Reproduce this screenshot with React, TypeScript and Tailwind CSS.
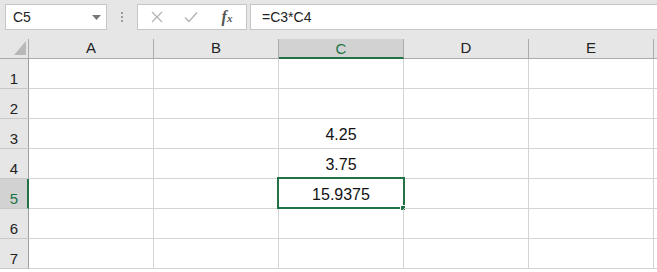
import React from 'react';

const cols = ['A', 'B', 'C', 'D', 'E'];
const rows = [1, 2, 3, 4, 5, 6, 7];

const values: Record<string, string> = {
  C3: '4.25',
  C4: '3.75',
  C5: '15.9375',
};

const App: React.FC = () => {
  const active = { col: 'C', row: 5 };

  return (
    <div className="w-[657px] h-[272px] overflow-hidden bg-white font-['Liberation_Sans',Arial,sans-serif] text-black select-none">
      {/* formula bar */}
      <div className="h-[39px] bg-[#e6e6e6] flex items-start pt-[4px]">
        <div className="ml-[5px] w-[102px] h-[26px] bg-white border border-[#c6c6c6] flex items-center justify-between pl-[7px] pr-[5px]">
          <span className="text-[14px] text-[#222]">C5</span>
          <svg width="9" height="5" viewBox="0 0 9 5">
            <path d="M0 0 L9 0 L4.5 5 Z" fill="#777" />
          </svg>
        </div>
        <div className="w-[30px] h-[26px] flex flex-col items-center justify-center gap-[2px]">
          <span className="w-[2px] h-[2px] bg-[#9a9a9a]" />
          <span className="w-[2px] h-[2px] bg-[#9a9a9a]" />
          <span className="w-[2px] h-[2px] bg-[#9a9a9a]" />
        </div>
        <div className="w-[110px] h-[26px] bg-white border border-[#c6c6c6] flex items-center">
          <div className="w-[38px] flex justify-center">
            <svg width="12" height="12" viewBox="0 0 12 12">
              <path d="M1 1 L11 11 M11 1 L1 11" stroke="#b4b4b4" strokeWidth="1.3" />
            </svg>
          </div>
          <div className="w-[30px] flex justify-center">
            <svg width="14" height="12" viewBox="0 0 14 12">
              <path d="M1 6.5 L5 10.5 L13 1.5" stroke="#b4b4b4" strokeWidth="1.4" fill="none" />
            </svg>
          </div>
          <div className="flex-1 flex justify-center pl-[2px]">
            <span className="font-['Liberation_Serif',serif] italic font-bold text-[16px] text-[#555] leading-none">
              f<span className="text-[11px]">x</span>
            </span>
          </div>
        </div>
        <div className="ml-[3px] flex-1 h-[26px] bg-white border border-[#c6c6c6] border-r-0 flex items-center pl-[11px]">
          <span className="text-[14px] text-[#222]">=C3*C4</span>
        </div>
      </div>

      {/* column headers */}
      <div className="flex h-[20px] bg-[#e6e6e6]">
        <div className="w-[29px] h-full border-r border-b border-[#ababab] relative">
          <svg className="absolute left-[14px] top-[2px]" width="12" height="14" viewBox="0 0 12 14">
            <path d="M12 0 L12 14 L0 14 Z" fill="#b8b8b8" />
          </svg>
        </div>
        {cols.map((c) => {
          const sel = c === active.col;
          return (
            <div
              key={c}
              className={`w-[125px] shrink-0 h-full border-r border-[#ababab] flex items-center justify-center text-[15px] ${
                sel ? 'bg-[#d2d2d2] border-b-2 border-b-[#217346] text-[#217346]' : 'border-b border-b-[#ababab] text-[#222]'
              }`}
            >
              <span className={sel ? 'mt-[2px]' : ''}>{c}</span>
            </div>
          );
        })}
        <div className="flex-1 h-full border-b border-[#ababab]" />
      </div>

      {/* rows */}
      {rows.map((r) => {
        const selRow = r === active.row;
        return (
          <div key={r} className="flex h-[30px]">
            <div
              className={`w-[29px] shrink-0 h-full border-b border-b-[#c8c8c8] flex items-end justify-center pb-[2px] text-[15px] leading-none ${
                selRow
                  ? 'bg-[#d2d2d2] border-r-2 border-r-[#217346] text-[#217346]'
                  : 'bg-[#e6e6e6] border-r border-r-[#9f9f9f] text-[#222]'
              }`}
            >
              <span className={selRow ? 'pl-[1px]' : ''}>{r}</span>
            </div>
            {cols.map((c) => {
              const key = `${c}${r}`;
              const isActive = selRow && c === active.col;
              return (
                <div
                  key={key}
                  className="relative w-[125px] shrink-0 h-full border-r border-b border-[#d4d4d4] flex items-end justify-center pb-[5px] text-[16px] leading-none text-[#111]"
                >
                  {values[key] && <span>{values[key]}</span>}
                  {isActive && (
                    <>
                      <div className="absolute -left-[2px] -top-[2px] w-[128px] h-[32px] border-2 border-[#217346]" />
                      <div className="absolute right-[-3px] bottom-[-3px] w-[6px] h-[6px] bg-[#217346] border border-white" />
                    </>
                  )}
                </div>
              );
            })}
            <div className="flex-1 h-full border-b border-[#d4d4d4]" />
          </div>
        );
      })}
    </div>
  );
};

export default App;
